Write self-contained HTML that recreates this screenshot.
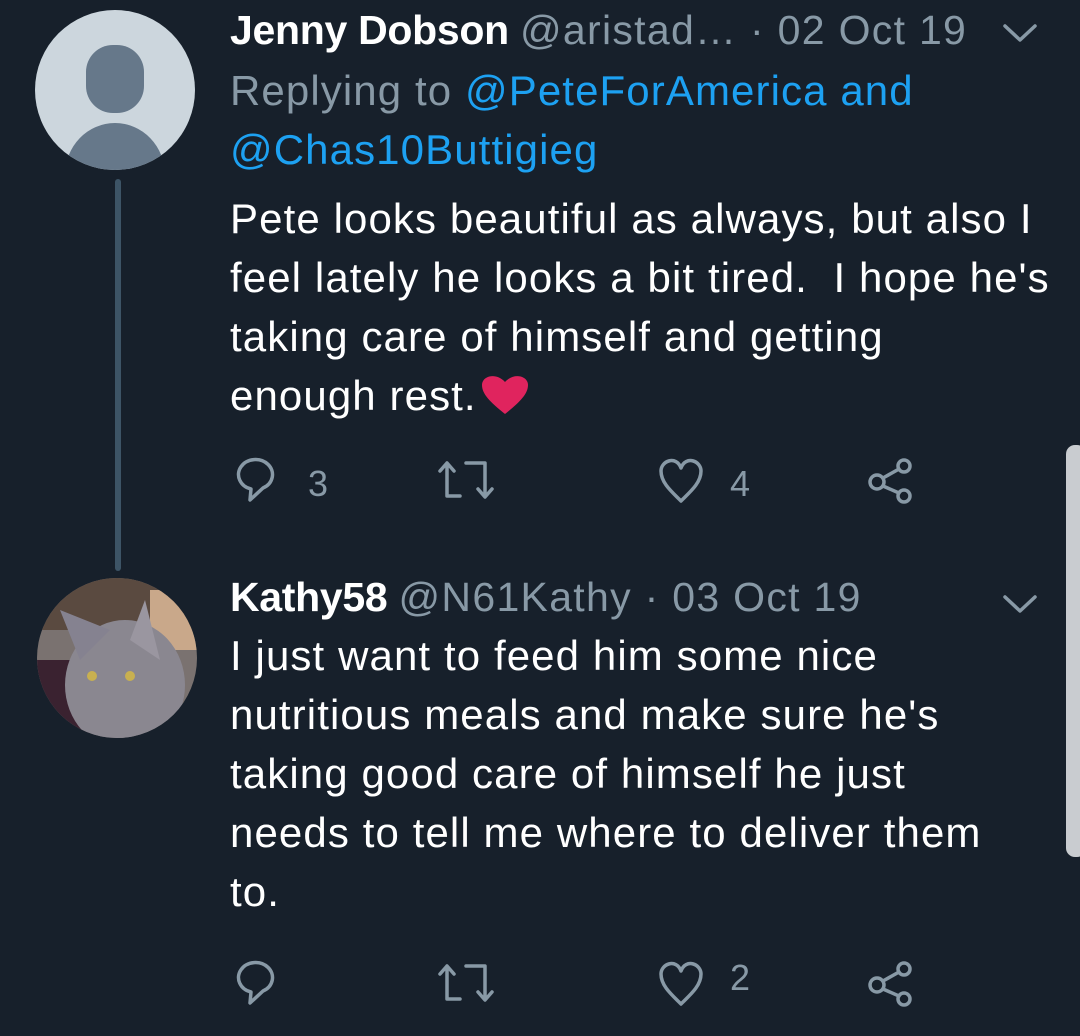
<!DOCTYPE html>
<html><head><meta charset="utf-8"><style>
body{margin:0;width:1080px;height:1036px;background:#17202b;overflow:hidden;position:relative;font-family:"Liberation Sans",sans-serif;color:#fff}
.a{position:absolute;white-space:nowrap}
.n{font-weight:bold;font-size:41px;letter-spacing:-0.3px}
.n span{font-weight:normal;letter-spacing:1.3px}
.g{color:#8899a6}
.b{color:#1da1f2}
.t{font-size:42px;line-height:59px;letter-spacing:1.1px}
.c{font-size:36px;color:#8899a6}
</style></head><body>
<svg class="a" style="left:0;top:0" width="1080" height="1036">
<circle cx="115" cy="90" r="80" fill="#ccd6dd"/>
<clipPath id="c1"><circle cx="115" cy="90" r="80"/></clipPath>
<g clip-path="url(#c1)" fill="#66788a">
<rect x="86" y="45" width="58" height="68" rx="27"/>
<ellipse cx="115" cy="175" rx="50" ry="52"/>
</g>
<rect x="115" y="179" width="6" height="392" rx="3" fill="#3d5466"/>
<clipPath id="c2"><circle cx="117" cy="658" r="80"/></clipPath>
<g clip-path="url(#c2)">
<rect x="30" y="570" width="180" height="180" fill="#7a7270"/>
<rect x="30" y="570" width="180" height="60" fill="#5a4a40"/>
<rect x="150" y="590" width="60" height="60" fill="#c9a88a"/>
<rect x="30" y="660" width="60" height="80" fill="#3a2230"/>
<ellipse cx="125" cy="685" rx="60" ry="65" fill="#8a8790"/>
<polygon points="60,610 110,630 80,660" fill="#858290"/>
<polygon points="145,600 160,660 130,640" fill="#9a96a0"/>
<circle cx="92" cy="676" r="5" fill="#c8b050"/><circle cx="130" cy="676" r="5" fill="#c8b050"/>
</g>
<rect x="1066" y="445" width="20" height="412" rx="9" fill="#c9ccd0"/>
<g fill="none" stroke="#8899a6" stroke-width="3.5" stroke-linecap="round" stroke-linejoin="round">
<path d="M250 500 L251 489 A17 15 0 1 1 263 488 Z"/>
<path d="M440 471 L447 463 L454 471 M447 463 L447 496 L460 496 M466 463 L485 463 L485 496 M478 489 L485 497 L492 489"/>
<path d="M681 501 C672 492 661 483 661 471 C661 461 676 455 681 468 C686 455 701 461 701 471 C701 483 690 492 681 501 Z"/>
<circle cx="877" cy="482" r="7"/><circle cx="904" cy="466" r="6"/><circle cx="904" cy="496" r="6"/>
<path d="M883 478 L899 469 M883 486 L899 493"/>
<path d="M250 1003 L251 992 A17 15 0 1 1 263 991 Z"/>
<path d="M440 974 L447 966 L454 974 M447 966 L447 999 L460 999 M466 966 L485 966 L485 999 M478 992 L485 1000 L492 992"/>
<path d="M681 1004 C672 995 661 986 661 974 C661 964 676 958 681 971 C686 958 701 964 701 974 C701 986 690 995 681 1004 Z"/>
<circle cx="877" cy="985" r="7"/><circle cx="904" cy="969" r="6"/><circle cx="904" cy="999" r="6"/>
<path d="M883 981 L899 972 M883 989 L899 996"/>
<path d="M1005 26 L1020 40 L1035 26"/>
<path d="M1005 597 L1020 611 L1035 597"/>
</g>
<path d="M505 414 C490 402 482 394 482 385 C482 376 496 372 505 382 C514 372 528 376 528 385 C528 394 520 402 505 414 Z" fill="#e0245e"/>
</svg>
<div class="a n" style="left:230px;top:7px">Jenny Dobson <span class="g">@aristad… · 02 Oct 19</span></div>
<div class="a t g" style="left:230px;top:61px">Replying to <span class="b">@PeteForAmerica and</span></div>
<div class="a t b" style="left:230px;top:120px">@Chas10Buttigieg</div>
<div class="a t" style="left:230px;top:189px">Pete looks beautiful as always, but also I<br>feel lately he looks a bit tired.&nbsp; I hope he's<br>taking care of himself and getting<br>enough rest.</div>
<div class="a c" style="left:308px;top:463px">3</div>
<div class="a c" style="left:730px;top:463px">4</div>
<div class="a n" style="left:230px;top:574px">Kathy58 <span class="g">@N61Kathy · 03 Oct 19</span></div>
<div class="a t" style="left:230px;top:626px">I just want to feed him some nice<br>nutritious meals and make sure he's<br>taking good care of himself he just<br>needs to tell me where to deliver them<br>to.</div>
<div class="a c" style="left:730px;top:957px">2</div>
</body></html>
